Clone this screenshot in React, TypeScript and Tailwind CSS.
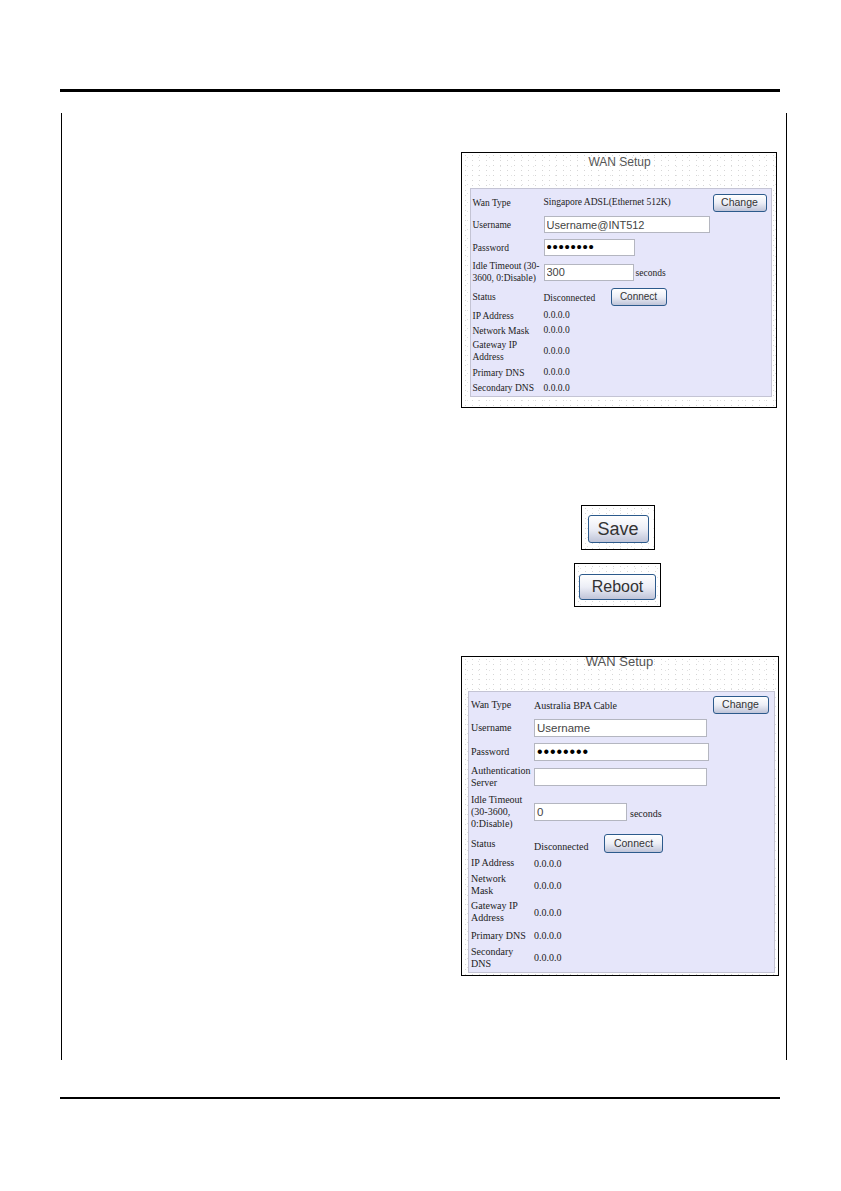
import type { ReactNode } from 'react';

const speckle =
  'bg-white bg-[radial-gradient(#d6d6d6_0.6px,transparent_0.8px),radial-gradient(#e2e2e2_0.7px,transparent_0.9px)] bg-[length:7px_5px,11px_9px]';

function Btn({ children, className }: { children: ReactNode; className: string }) {
  return (
    <div
      className={`flex shrink-0 items-center justify-center rounded-[3px] border border-[#2c5a8c] bg-linear-to-b from-white via-[#eceef6] to-[#bfc4d8] font-['Liberation_Sans',sans-serif] text-[#333] ${className}`}
    >
      {children}
    </div>
  );
}

function Field({ value, className, type = 'text' }: { value: string; className: string; type?: string }) {
  return (
    <input
      readOnly
      type={type}
      value={value}
      className={`shrink-0 border border-[#b4b6c0] bg-white px-[2px] font-['Liberation_Sans',sans-serif] outline-none ${type === 'password' ? 'text-black' : 'text-[#444]'} ${className}`}
    />
  );
}

function Row({ h, label, labelW, children }: { h: string; label: ReactNode; labelW: string; children?: ReactNode }) {
  return (
    <div className={`flex items-center ${h}`}>
      <div className={`shrink-0 leading-[12px] ${labelW}`}>{label}</div>
      {children}
    </div>
  );
}

function SingaporePanel() {
  const w = 'w-[71px]';
  return (
    <div className={`h-[256px] w-[316px] border-[1.5px] border-black pl-[7.5px] pr-[4.5px] ${speckle}`}>
      <div className="flex h-[35px] justify-center pt-[2px] pr-[2px] font-['Liberation_Sans',sans-serif] text-[12px] leading-[14px] text-[#555]">
        WAN Setup
      </div>
      <div className="h-[209px] border border-[#c4c4d4] bg-[#e6e6fa] pt-[3px] pl-[2px] pr-[4px] font-['Liberation_Serif',serif] text-[9.5px] text-[#222]">
        <Row h="h-[21px]" label="Wan Type" labelW={w}>
          <span className="flex-1">Singapore ADSL(Ethernet 512K)</span>
          <Btn className="h-[18px] w-[54px] text-[10.5px]">Change</Btn>
        </Row>
        <Row h="h-[23px]" label="Username" labelW={w}>
          <Field value="Username@INT512" className="h-[17px] w-[166px] text-[11px]" />
        </Row>
        <Row h="h-[23px]" label="Password" labelW={w}>
          <Field value="12345678" type="password" className="h-[17px] w-[91px] text-[15px] tracking-[0.75px]" />
        </Row>
        <Row h="h-[26px]" label={<>Idle Timeout (30-<br />3600, 0:Disable)</>} labelW={w}>
          <Field value="300" className="h-[17px] w-[90px] text-[11px]" />
          <span className="ml-[2px] mt-[3px]">seconds</span>
        </Row>
        <Row h="h-[23px]" label="Status" labelW={w}>
          <span className="mt-[4px] w-[67px]">Disconnected</span>
          <Btn className="h-[18px] w-[56px] text-[10px]">Connect</Btn>
        </Row>
        <Row h="h-[15px]" label="IP Address" labelW={w}>0.0.0.0</Row>
        <Row h="h-[15px]" label="Network Mask" labelW={w}>0.0.0.0</Row>
        <Row h="h-[26px]" label={<>Gateway IP<br />Address</>} labelW={w}>0.0.0.0</Row>
        <Row h="h-[17px]" label="Primary DNS" labelW={w}>0.0.0.0</Row>
        <Row h="h-[14px]" label="Secondary DNS" labelW={w}>0.0.0.0</Row>
      </div>
    </div>
  );
}

function AustraliaPanel() {
  const w = 'w-[63px]';
  return (
    <div className={`h-[320px] w-[318px] border-[1.5px] border-black pl-[5.5px] pr-[3.5px] ${speckle}`}>
      <div className="flex h-[34px] justify-center pr-[3px] font-['Liberation_Sans',sans-serif] text-[13px] leading-[9px] text-[#555]">
        WAN Setup
      </div>
      <div className="h-[282px] border border-[#c4c4d4] bg-[#e6e6fa] pt-[3px] pl-[2.5px] pr-[5px] font-['Liberation_Serif',serif] text-[10px] text-[#222]">
        <Row h="h-[20px]" label="Wan Type" labelW={w}>
          <span className="flex-1">Australia BPA Cable</span>
          <Btn className="h-[18px] w-[56px] text-[10.5px]">Change</Btn>
        </Row>
        <Row h="h-[25px]" label="Username" labelW={w}>
          <Field value="Username" className="h-[18px] w-[173px] text-[11.5px]" />
        </Row>
        <Row h="h-[23px]" label="Password" labelW={w}>
          <Field value="12345678" type="password" className="h-[18px] w-[175px] text-[16px] tracking-[0.9px]" />
        </Row>
        <Row h="h-[27px]" label={<>Authentication<br />Server</>} labelW={w}>
          <Field value="" className="h-[18px] w-[173px] text-[11.5px]" />
        </Row>
        <Row h="h-[43px]" label={<>Idle Timeout<br />(30-3600,<br />0:Disable)</>} labelW={w}>
          <Field value="0" className="h-[18px] w-[93px] text-[11.5px]" />
          <span className="ml-[3px] mt-[3px]">seconds</span>
        </Row>
        <Row h="h-[21px]" label="Status" labelW={w}>
          <span className="mt-[5px] w-[70px]">Disconnected</span>
          <Btn className="h-[19px] w-[59px] text-[10.5px]">Connect</Btn>
        </Row>
        <Row h="h-[18px]" label="IP Address" labelW={w}>0.0.0.0</Row>
        <Row h="h-[26px]" label={<>Network<br />Mask</>} labelW={w}>0.0.0.0</Row>
        <Row h="h-[28px]" label={<>Gateway IP<br />Address</>} labelW={w}>0.0.0.0</Row>
        <Row h="h-[19px]" label="Primary DNS" labelW={w}>0.0.0.0</Row>
        <Row h="h-[25px]" label={<>Secondary<br />DNS</>} labelW={w}>0.0.0.0</Row>
      </div>
    </div>
  );
}

export default function App() {
  return (
    <div className="h-[1191px] w-[841px] overflow-hidden bg-white pl-[60px] pt-[89px]">
      <div className="h-[3px] w-[720px] bg-black" />
      <div className="ml-[1px] mt-[21px] h-[947px] w-[726px] border-x border-black pl-[399px] pt-[39px]">
        <div className="flex w-[318px] flex-col items-start">
          <SingaporePanel />
          <div className={`ml-[120px] mt-[97px] flex h-[45px] w-[74px] items-center justify-center border border-black pt-[3px] ${speckle}`}>
            <Btn className="h-[28px] w-[61px] border-[1.5px] text-[18px]">Save</Btn>
          </div>
          <div className={`ml-[113px] mt-[13px] flex h-[44px] w-[87px] items-center justify-center border border-black pt-[3px] ${speckle}`}>
            <Btn className="h-[26px] w-[77px] border-[1.5px] text-[16px]">Reboot</Btn>
          </div>
          <div className="mt-[49px]">
            <AustraliaPanel />
          </div>
        </div>
      </div>
      <div className="mt-[37px] h-[2px] w-[720px] bg-black" />
    </div>
  );
}
